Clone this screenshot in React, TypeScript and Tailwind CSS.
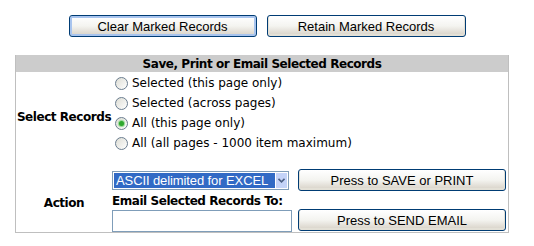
import { useState } from 'react';

// ── XP-style push button ──────────────────────────────────────────────────
function XpButton({
  label,
  focused = false,
  className = '',
}: {
  label: string;
  focused?: boolean;
  className?: string;
}) {
  return (
    <button
      type="button"
      className={`flex h-[22px] items-center justify-center whitespace-nowrap rounded-[3px] border border-[#003c74] bg-gradient-to-b from-white via-[#f4f4f0] to-[#d6d0c5] font-['Liberation_Sans',Arial,sans-serif] text-[13px] leading-none text-black ${
        focused ? 'shadow-[inset_0_0_0_2px_#a8c4ee]' : 'shadow-[inset_0_-1px_0_1px_#e3e0d6]'
      } ${className}`}
    >
      {label}
    </button>
  );
}

// ── XP-style radio ─────────────────────────────────────────────────────────
function Radio({
  label,
  checked,
  onClick,
}: {
  label: string;
  checked: boolean;
  onClick: () => void;
}) {
  return (
    <div className="flex h-[20px] cursor-default items-center whitespace-nowrap" onClick={onClick}>
      <span className="ml-[3px] mr-[4px] flex h-[13px] w-[13px] items-center justify-center rounded-full border border-[#6a7d8f] bg-gradient-to-br from-[#dcdcd4] to-white">
        {checked && <span className="h-[5px] w-[5px] rounded-full bg-[#2ea82e] shadow-[0_0_1px_1px_#8fd68f]" />}
      </span>
      <span>{label}</span>
    </div>
  );
}

const OPTIONS = [
  'Selected (this page only)',
  'Selected (across pages)',
  'All (this page only)',
  'All (all pages - 1000 item maximum)',
];

export default function App() {
  const [choice, setChoice] = useState(2);

  return (
    <div className="flex h-[246px] w-[534px] flex-col bg-white font-['DejaVu_Sans',Verdana,sans-serif] text-[12px] text-black">
      {/* Top buttons */}
      <div className="flex justify-center gap-[10px] pt-[15px]">
        <XpButton label="Clear Marked Records" focused className="w-[188px]" />
        <XpButton label="Retain Marked Records" className="w-[199px]" />
      </div>

      {/* Save / print / email panel */}
      <div className="ml-[15px] mt-[18px] w-[494px] border-x border-b border-[#bfbfbf]">
        <div className="flex h-[17px] items-center justify-center whitespace-nowrap bg-[#cccccc] font-bold tracking-[-0.45px]">
          Save, Print or Email Selected Records
        </div>

        {/* Select Records row */}
        <div className="flex h-[97px]">
          <div className="flex w-[96px] items-center justify-center whitespace-nowrap pb-[8px] font-bold tracking-[-0.45px]">
            Select Records
          </div>
          <div className="flex flex-col pt-[1px]">
            {OPTIONS.map((o, i) => (
              <Radio key={o} label={o} checked={choice === i} onClick={() => setChoice(i)} />
            ))}
          </div>
        </div>

        {/* Action row */}
        <div className="flex h-[63px]">
          <div className="flex w-[96px] items-center justify-center pt-[4px] font-bold tracking-[-0.45px]">Action</div>
          <div className="flex flex-col">
            <div className="flex items-center gap-[9px]">
              <div className="flex h-[19px] w-[177px] items-center border border-[#7f9db9] bg-white p-[1px]">
                <span className="flex h-full w-[161px] items-center overflow-visible whitespace-nowrap bg-[#316ac5] pl-[2px] font-['Liberation_Sans',Arial,sans-serif] text-[13px] tracking-[-0.1px] leading-none text-white">
                  ASCII delimited for EXCEL
                </span>
                <span className="ml-auto flex h-full w-[11px] items-center justify-center bg-[#c4d3f8]">
                  <svg width="7" height="5" viewBox="0 0 7 5">
                    <path d="M0.5 0.8 L3.5 3.8 L6.5 0.8" fill="none" stroke="#4d6185" strokeWidth="1.6" />
                  </svg>
                </span>
              </div>
              <XpButton label="Press to SAVE or PRINT" className="w-[208px]" />
            </div>
            <div className="flex h-[20px] items-center whitespace-nowrap font-bold tracking-[-0.45px]">
              Email Selected Records To:
            </div>
            <div className="flex items-start gap-[6px]">
              <div className="h-[22px] w-[180px] border border-[#7f9db9] bg-white" />
              <XpButton label="Press to SEND EMAIL" className="-mt-[1px] w-[208px]" />
            </div>
          </div>
        </div>
      </div>
    </div>
  );
}
